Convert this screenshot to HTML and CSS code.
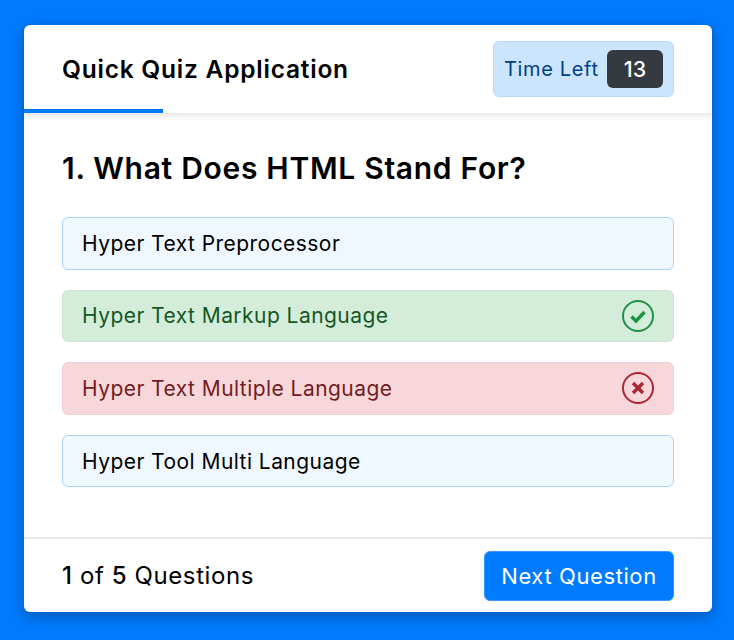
FILE: index.html
```html
<!DOCTYPE html>
<html lang="en">
<head>
<meta charset="utf-8">
<title>Quick Quiz Application</title>
<link rel="stylesheet" href="styles.css">
</head>
<body>
<main class="quiz">
  <header class="quiz-header">
    <div class="title">Quick Quiz Application</div>
    <div class="timer">
      <span class="timer-label">Time Left</span>
      <span class="timer-sec">13</span>
    </div>
    <div class="progress"></div>
  </header>
  <section class="quiz-body">
    <h1 class="question">1. What Does HTML Stand For?</h1>
    <ul class="options">
      <li class="option">Hyper Text Preprocessor</li>
      <li class="option correct">Hyper Text Markup Language
        <svg class="mark" viewBox="0 0 32 32" width="32" height="32"><circle cx="16" cy="16" r="15" fill="none" stroke="#1f9145" stroke-width="2"/><path d="M9.5 16.5l4.5 4.5 8.5-9" fill="none" stroke="#1f9145" stroke-width="3.4"/></svg>
      </li>
      <li class="option wrong">Hyper Text Multiple Language
        <svg class="mark" viewBox="0 0 32 32" width="32" height="32"><circle cx="16" cy="16" r="15" fill="none" stroke="#ab2635" stroke-width="2"/><path d="M11 11l10 10M21 11l-10 10" fill="none" stroke="#ab2635" stroke-width="3.4"/></svg>
      </li>
      <li class="option">Hyper Tool Multi Language</li>
    </ul>
  </section>
  <footer class="quiz-footer">
    <div class="count"><b>1</b> of <b>5</b> Questions</div>
    <button class="next">Next Question</button>
  </footer>
</main>
</body>
</html>
```
FILE: styles.css
```css
* { box-sizing: border-box; }
html, body { margin: 0; height: 100%; }
body {
  background: #007bff;
  font-family: Inter, "Noto Sans", sans-serif;
  color: #000;
  padding: 25px 22px 28px 24px;
}
.quiz {
  width: 688px;
  height: 587px;
  background: #fff;
  border-radius: 6px;
  box-shadow: 0 4px 16px rgba(0, 0, 0, .3);
  display: flex;
  flex-direction: column;
}
.quiz-header {
  position: relative;
  height: 88px;
  flex: none;
  padding: 16px 38px 16px 38px;
  display: flex;
  align-items: center;
  justify-content: space-between;
  box-shadow: 0 3px 5px rgba(0, 0, 0, .1);
}
.title { font-size: 24.5px; font-weight: 600; letter-spacing: .77px; }
.timer {
  width: 181px;
  height: 56px;
  background: #cce5ff;
  border: 1px solid #b8daff;
  border-radius: 6px;
  display: flex;
  align-items: center;
  justify-content: space-between;
  padding: 0 10px;
}
.timer-label { color: #004085; font-size: 20px; letter-spacing: .65px; }
.timer-sec {
  width: 56px;
  height: 38px;
  background: #343a40;
  border-radius: 6px;
  color: #fff;
  font-size: 21.5px;
  font-weight: 500;
  display: flex;
  align-items: center;
  justify-content: center;
}
.progress {
  position: absolute;
  left: 0;
  bottom: 0;
  width: 139px;
  height: 4px;
  background: #007bff;
}
.quiz-body { flex: 1; padding: 35px 38px 0; }
.question {
  margin: 0 0 29px;
  font-size: 30px;
  line-height: 40px;
  font-weight: 600;
  letter-spacing: .7px;
}
.options {
  list-style: none;
  margin: 0;
  padding: 0;
  display: flex;
  flex-direction: column;
  gap: 20px;
}
.option {
  height: 52.6px;
  padding: 0 19px;
  background: #f0f8ff;
  border: 1px solid #a8d3ff;
  border-radius: 6px;
  font-size: 21px;
  letter-spacing: .45px;
  display: flex;
  align-items: center;
  justify-content: space-between;
}
.option.correct { background: #d4edda; border-color: #cbe8d2; color: #155724; }
.option.wrong { background: #f8d7da; border-color: #f6cfd3; color: #721c24; }
.quiz-footer {
  flex: none;
  height: 75px;
  border-top: 2px solid #e8e8e8;
  padding: 0 38px;
  display: flex;
  align-items: center;
  justify-content: space-between;
}
.count { font-size: 24px; letter-spacing: .6px; }
.count b { font-weight: 500; }
.next {
  width: 190px;
  height: 50px;
  background: #007bff;
  border: 1px solid #3d97f7;
  border-radius: 6px;
  color: #fff;
  font-family: inherit;
  font-size: 22px;
  letter-spacing: .6px;
  padding: 0;
}
```
